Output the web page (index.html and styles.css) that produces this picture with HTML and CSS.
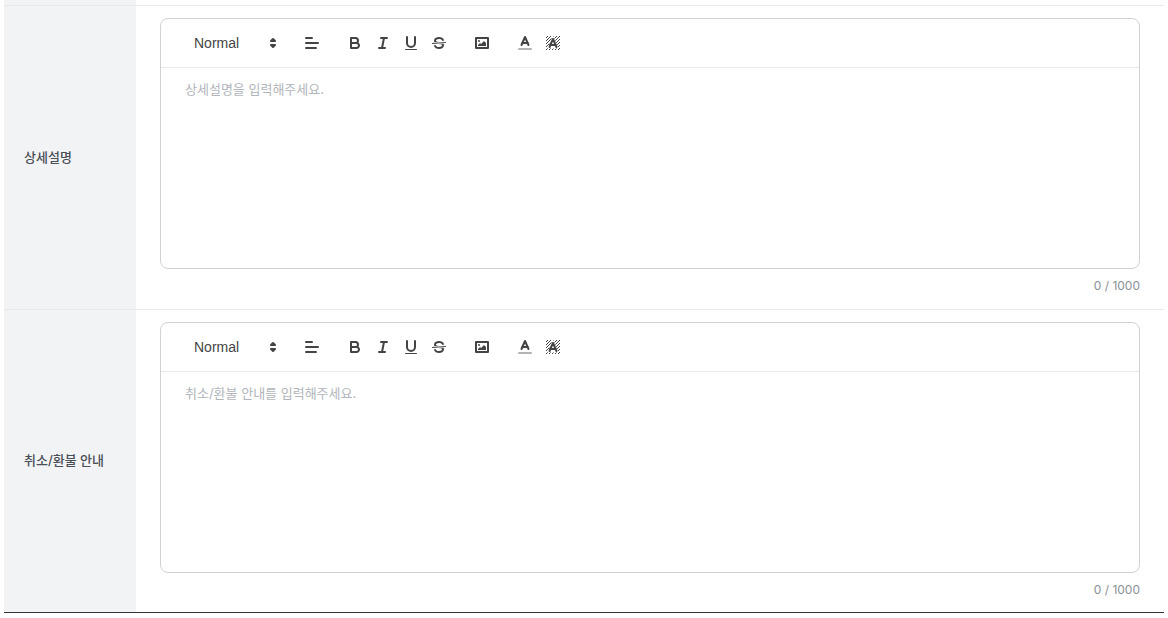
FILE: index.html
```html
<!DOCTYPE html>
<html lang="ko">
<head>
    <meta charset="UTF-8">
    <meta name="viewport" content="width=device-width, initial-scale=1.0">
    <title>상품 등록</title>
    <link rel="stylesheet" href="styles.css">
</head>
<body>

    <!-- 툴바 아이콘 -->
    <svg class="icon-defs" aria-hidden="true">
        <symbol id="icon-arrows" viewBox="0 0 18 18">
            <polygon class="fill line" points="7 11 9 13 11 11 7 11"/>
            <polygon class="fill line" points="7 7 9 5 11 7 7 7"/>
        </symbol>
        <symbol id="icon-align" viewBox="0 0 18 18">
            <line class="line" x1="3" x2="15" y1="9" y2="9"/>
            <line class="line" x1="3" x2="13" y1="14" y2="14"/>
            <line class="line" x1="3" x2="9" y1="4" y2="4"/>
        </symbol>
        <symbol id="icon-bold" viewBox="0 0 18 18">
            <path class="line" d="M5,4H9.5A2.5,2.5,0,0,1,12,6.5v0A2.5,2.5,0,0,1,9.5,9H5A0,0,0,0,1,5,9V4A0,0,0,0,1,5,4Z"/>
            <path class="line" d="M5,9h5.5A2.5,2.5,0,0,1,13,11.5v0A2.5,2.5,0,0,1,10.5,14H5a0,0,0,0,1,0,0V9A0,0,0,0,1,5,9Z"/>
        </symbol>
        <symbol id="icon-italic" viewBox="0 0 18 18">
            <line class="line" x1="7" x2="13" y1="4" y2="4"/>
            <line class="line" x1="5" x2="11" y1="14" y2="14"/>
            <line class="line" x1="8" x2="10" y1="14" y2="4"/>
        </symbol>
        <symbol id="icon-underline" viewBox="0 0 18 18">
            <path class="line" d="M5,3V9a4.012,4.012,0,0,0,4,4H9a4.012,4.012,0,0,0,4-4V3"/>
            <rect class="fill" height="1" rx="0.5" ry="0.5" width="12" x="3" y="15"/>
        </symbol>
        <symbol id="icon-strike" viewBox="0 0 18 18">
            <line class="line thin" x1="15.5" x2="2.5" y1="8.5" y2="9.5"/>
            <path class="fill" d="M9.007,8C6.542,7.791,6,7.519,6,6.5,6,5.792,7.283,5,9,5c1.571,0,2.765.679,2.969,1.309a1,1,0,0,0,1.9-.617C13.356,4.106,11.354,3,9,3,6.2,3,4,4.538,4,6.5a3.2,3.2,0,0,0,.5,1.843Z"/>
            <path class="fill" d="M8.984,10C11.457,10.208,12,10.479,12,11.5c0,0.708-1.283,1.5-3,1.5-1.571,0-2.765-.679-2.969-1.309a1,1,0,1,0-1.9.617C4.644,13.894,6.646,15,9,15c2.8,0,5-1.538,5-3.5a3.2,3.2,0,0,0-.5-1.843Z"/>
        </symbol>
        <symbol id="icon-image" viewBox="0 0 18 18">
            <rect class="line" height="10" width="12" x="3" y="4"/>
            <circle class="fill" cx="6" cy="7" r="1"/>
            <polyline class="fill" points="5 12 5 11 7 9 8 10 11 7 13 9 13 12 5 12"/>
        </symbol>
        <symbol id="icon-color" viewBox="0 0 18 18">
            <line class="line faded" x1="3" x2="15" y1="15" y2="15"/>
            <polyline class="line" points="5.5 11 9 3 12.5 11"/>
            <line class="line" x1="11.63" x2="6.38" y1="9" y2="9"/>
        </symbol>
        <symbol id="icon-background" viewBox="0 0 18 18">
            <path class="hatch" d="M2,4L4,2M2,7L7,2M2,10L10,2M2,13L13,2M2,16L16,2M5,16L16,5M8,16L16,8M11,16L16,11M14,16L16,14"/>
            <polygon class="halo" points="5.5 13 9 5 12.5 13"/>
            <polyline class="line" points="5.5 13 9 5 12.5 13"/>
            <line class="line" x1="11.63" x2="6.38" y1="11" y2="11"/>
        </symbol>
    </svg>

    <main class="form">

        <div class="form-top"></div>

        <div class="form-row">
            <label class="form-label" for="description">상세설명</label>
            <div class="form-field">
                <div class="editor">
                    <div class="toolbar">
                        <div class="format-select">
                            <select aria-label="문단 스타일">
                                <option>Normal</option>
                                <option>Heading 1</option>
                                <option>Heading 2</option>
                            </select>
                            <svg class="icon"><use href="#icon-arrows"/></svg>
                        </div>
                        <div class="formats">
                            <button type="button" aria-label="정렬"><svg class="icon"><use href="#icon-align"/></svg></button>
                        </div>
                        <div class="formats">
                            <button type="button" aria-label="굵게"><svg class="icon"><use href="#icon-bold"/></svg></button>
                            <button type="button" aria-label="기울임"><svg class="icon"><use href="#icon-italic"/></svg></button>
                            <button type="button" aria-label="밑줄"><svg class="icon"><use href="#icon-underline"/></svg></button>
                            <button type="button" aria-label="취소선"><svg class="icon"><use href="#icon-strike"/></svg></button>
                        </div>
                        <div class="formats">
                            <button type="button" aria-label="이미지"><svg class="icon"><use href="#icon-image"/></svg></button>
                        </div>
                        <div class="formats">
                            <button type="button" aria-label="글자색"><svg class="icon"><use href="#icon-color"/></svg></button>
                            <button type="button" aria-label="배경색"><svg class="icon"><use href="#icon-background"/></svg></button>
                        </div>
                    </div>
                    <textarea class="editor-text" id="description" maxlength="1000" placeholder="상세설명을 입력해주세요."></textarea>
                </div>
                <p class="counter">0 / 1000</p>
            </div>
        </div>

        <div class="form-row">
            <label class="form-label" for="refund">취소/환불 안내</label>
            <div class="form-field">
                <div class="editor">
                    <div class="toolbar">
                        <div class="format-select">
                            <select aria-label="문단 스타일">
                                <option>Normal</option>
                                <option>Heading 1</option>
                                <option>Heading 2</option>
                            </select>
                            <svg class="icon"><use href="#icon-arrows"/></svg>
                        </div>
                        <div class="formats">
                            <button type="button" aria-label="정렬"><svg class="icon"><use href="#icon-align"/></svg></button>
                        </div>
                        <div class="formats">
                            <button type="button" aria-label="굵게"><svg class="icon"><use href="#icon-bold"/></svg></button>
                            <button type="button" aria-label="기울임"><svg class="icon"><use href="#icon-italic"/></svg></button>
                            <button type="button" aria-label="밑줄"><svg class="icon"><use href="#icon-underline"/></svg></button>
                            <button type="button" aria-label="취소선"><svg class="icon"><use href="#icon-strike"/></svg></button>
                        </div>
                        <div class="formats">
                            <button type="button" aria-label="이미지"><svg class="icon"><use href="#icon-image"/></svg></button>
                        </div>
                        <div class="formats">
                            <button type="button" aria-label="글자색"><svg class="icon"><use href="#icon-color"/></svg></button>
                            <button type="button" aria-label="배경색"><svg class="icon"><use href="#icon-background"/></svg></button>
                        </div>
                    </div>
                    <textarea class="editor-text" id="refund" maxlength="1000" placeholder="취소/환불 안내를 입력해주세요."></textarea>
                </div>
                <p class="counter">0 / 1000</p>
            </div>
        </div>

    </main>

</body>
</html>
```
FILE: styles.css
```css
* {
    box-sizing: border-box;
}

body {
    margin: 0;
    background-color: #fff;
    color: #4a4e57;
    font-family: Inter, "Noto Sans CJK KR", sans-serif;
    font-size: 13px;
    line-height: 18px;
}

.icon-defs {
    display: none;
}

.form {
    margin: 0 4px;
    border-bottom: 1px solid #33333b;
}

/* 윗줄의 끝부분 */
.form-top {
    width: 132px;
    height: 5px;
    background-color: #f2f3f5;
}

.form-row {
    display: grid;
    grid-template-columns: 132px 1fr;
    border-top: 1px solid #e8e9eb;
}

.form-label {
    display: flex;
    align-items: center;
    padding: 0 20px 2px;
    background-color: #f2f3f5;
    font-weight: 500;
}

.form-field {
    padding: 12px 24px 14px;
}

.form-row:last-child .form-field {
    padding-bottom: 13px;
}

.editor {
    border: 1px solid #d0d1d6;
    border-radius: 8px;
    overflow: hidden;
}

.toolbar {
    display: flex;
    align-items: center;
    gap: 15px;
    padding: 12px 24px;
    border-bottom: 1px solid #e8e9eb;
}

.format-select {
    display: grid;
    grid-template-columns: 78px 18px;
    align-items: center;
    height: 24px;
    border: 1px solid transparent;
}

.format-select select {
    grid-area: 1 / 1 / 2 / 3;
    height: 22px;
    padding: 0 8px;
    border: none;
    background: none;
    appearance: none;
    color: #444;
    font-family: "Liberation Sans", sans-serif;
    font-size: 14px;
    font-weight: 500;
    cursor: pointer;
}

.format-select .icon {
    grid-area: 1 / 2 / 2 / 3;
    pointer-events: none;
}

.formats {
    display: flex;
}

.formats button {
    width: 28px;
    height: 24px;
    padding: 3px 5px;
    border: none;
    background: none;
    cursor: pointer;
}

.icon {
    display: block;
    width: 18px;
    height: 18px;
}

.line {
    fill: none;
    stroke: #444;
    stroke-width: 2;
    stroke-linecap: round;
    stroke-linejoin: round;
}

.fill {
    fill: #444;
}

.thin {
    stroke-width: 1;
}

.faded {
    opacity: 0.4;
}

.hatch {
    fill: none;
    stroke: #444;
    stroke-width: 1;
    shape-rendering: crispEdges;
}

.halo {
    fill: #fff;
    stroke: #fff;
    stroke-width: 3;
}

.editor-text {
    display: block;
    width: 100%;
    height: 200px;
    padding: 12px 24px;
    border: none;
    outline: none;
    resize: none;
    background: none;
    color: #4a4e57;
    font: inherit;
}

.editor-text::placeholder {
    color: #b1b5bb;
}

.counter {
    margin: 8px 0 0;
    color: #8a8f96;
    font-size: 12px;
    text-align: right;
}
```
